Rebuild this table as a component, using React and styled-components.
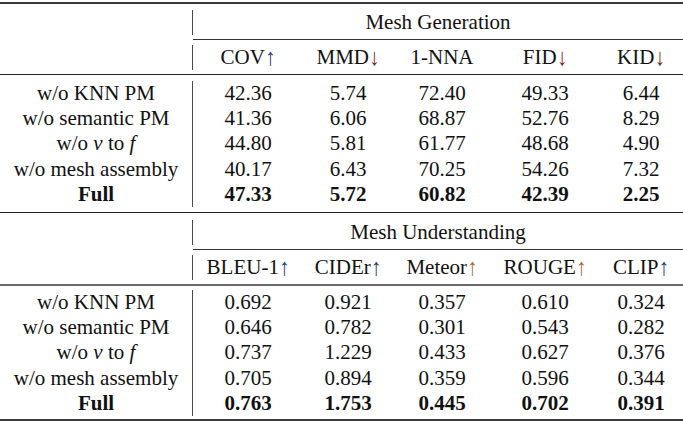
import React from 'react';
import styled, { createGlobalStyle } from 'styled-components';

const GlobalStyle = createGlobalStyle`
  html, body { margin: 0; padding: 0; background: #ffffff; }
  body {
    font-family: 'Liberation Serif', 'Times New Roman', serif;
    font-size: 21px;
    color: #111111;
  }
`;

const COLS = '193px 110px 90px 98px 108px 1fr';

const Table = styled.div`
  width: 683px;
  display: flex;
  flex-direction: column;
`;

const Rule = styled.div`
  height: ${(p) => p.$h || 1}px;
  background: ${(p) => p.$c || '#222'};
  margin-top: ${(p) => p.$mt || 0}px;
  margin-left: ${(p) => p.$ml || 0}px;
`;

const Block = styled.div`
  padding-top: ${(p) => p.$pt || 0}px;
  padding-bottom: ${(p) => p.$pb || 0}px;
`;

const Row = styled.div`
  display: grid;
  grid-template-columns: ${COLS};
  height: ${(p) => p.$h || 25}px;
  line-height: ${(p) => p.$h || 25}px;
  font-weight: ${(p) => (p.$bold ? 700 : 400)};
`;

const Stub = styled.div`
  text-align: center;
  border-right: 1px solid #4a4a4a;
  white-space: nowrap;
`;

const Cell = styled.div`
  text-align: center;
  white-space: nowrap;
`;

const Span = styled.div`
  grid-column: 2 / -1;
  text-align: center;
  white-space: nowrap;
`;

const Arrow = styled.span`
  color: ${(p) => p.$c};
  font-family: 'Liberation Serif', 'DejaVu Serif', serif;
  display: inline-block;
  transform: scaleY(1.15);
`;

const I = styled.span`
  font-family: 'Liberation Serif', 'Times New Roman', serif;
  font-style: italic;
`;

const UP = '#23336e';
const DOWN = '#7e2a24';
const ORANGE = '#a8642e';

const genHead = [
  { t: 'COV', a: '↑', c: UP },
  { t: 'MMD', a: '↓', c: DOWN },
  { t: '1-NNA' },
  { t: 'FID', a: '↓', c: DOWN },
  { t: 'KID', a: '↓', c: DOWN },
];

const undHead = [
  { t: 'BLEU-1', a: '↑', c: UP },
  { t: 'CIDEr', a: '↑', c: UP },
  { t: 'Meteor', a: '↑', c: ORANGE },
  { t: 'ROUGE', a: '↑', c: ORANGE },
  { t: 'CLIP', a: '↑', c: UP },
];

const labels = [
  'w/o KNN PM',
  'w/o semantic PM',
  'vtof',
  'w/o mesh assembly',
  'Full',
];

const genRows = [
  ['42.36', '5.74', '72.40', '49.33', '6.44'],
  ['41.36', '6.06', '68.87', '52.76', '8.29'],
  ['44.80', '5.81', '61.77', '48.68', '4.90'],
  ['40.17', '6.43', '70.25', '54.26', '7.32'],
  ['47.33', '5.72', '60.82', '42.39', '2.25'],
];

const undRows = [
  ['0.692', '0.921', '0.357', '0.610', '0.324'],
  ['0.646', '0.782', '0.301', '0.543', '0.282'],
  ['0.737', '1.229', '0.433', '0.627', '0.376'],
  ['0.705', '0.894', '0.359', '0.596', '0.344'],
  ['0.763', '1.753', '0.445', '0.702', '0.391'],
];

function Label({ text }) {
  if (text === 'vtof') {
    return (
      <>
        w/o <I>v</I> to <I>f</I>
      </>
    );
  }
  return text;
}

function Header({ title, heads }) {
  return (
    <>
      <Block $pt={6}>
        <Row>
          <Stub />
          <Span>{title}</Span>
        </Row>
      </Block>
      <Rule $mt={4} $ml={193} $c="#333" />
      <Block $pt={5}>
        <Row>
          <Stub />
          {heads.map((h) => (
            <Cell key={h.t}>
              {h.t}
              {h.a && <Arrow $c={h.c}>{h.a}</Arrow>}
            </Cell>
          ))}
        </Row>
      </Block>
    </>
  );
}

function Body({ rows, pt, pb }) {
  return (
    <Block $pt={pt} $pb={pb}>
      {rows.map((r, i) => (
        <Row key={i} $bold={i === rows.length - 1} $h={25.2}>
          <Stub>
            <Label text={labels[i]} />
          </Stub>
          {r.map((v, j) => (
            <Cell key={j}>{v}</Cell>
          ))}
        </Row>
      ))}
    </Block>
  );
}

export default function App() {
  return (
    <>
      <GlobalStyle />
      <Table>
        <Rule $mt={2} $h={2} $c="#3a3a3a" />
        <Header title="Mesh Generation" heads={genHead} />
        <Rule $mt={4} $h={1} $c="#222" />
        <Body rows={genRows} pt={6} pb={5} />
        <Rule $h={1} $c="#222" />
        <Block $pt={1}>
          <Header title="Mesh Understanding" heads={undHead} />
        </Block>
        <Rule $mt={4} $h={2} $c="#6a6a6a" />
        <Body rows={undRows} pt={4} pb={3} />
        <Rule $h={2} $c="#3a3a3a" />
      </Table>
    </>
  );
}
